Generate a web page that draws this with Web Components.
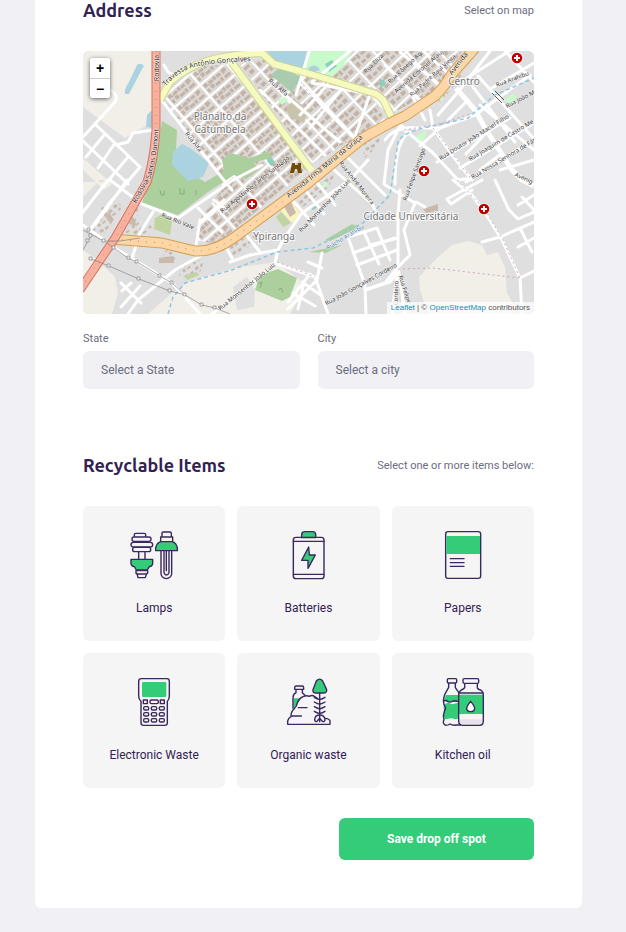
<!DOCTYPE html>
<html lang="en">
<head>
<meta charset="utf-8">
<meta name="viewport" content="width=device-width, initial-scale=1">
<title>Drop off spot</title>
<style>
body{margin:0;padding:0 44px 24px 35px;background:#f0f0f5;color:#322153;font-family:Roboto,sans-serif;font-size:12px}
</style>
</head>
<body>
<spot-form>
  <form-section heading="Address" hint="Select on map">
    <city-map></city-map>
    <field-row>
      <select-field label="State" placeholder="Select a State"></select-field>
      <select-field label="City" placeholder="Select a city"></select-field>
    </field-row>
  </form-section>
  <form-section heading="Recyclable Items" hint="Select one or more items below:">
    <item-grid>
      <item-card icon="lamps">Lamps</item-card>
      <item-card icon="batteries">Batteries</item-card>
      <item-card icon="papers">Papers</item-card>
      <item-card icon="electronic">Electronic Waste</item-card>
      <item-card icon="organic">Organic waste</item-card>
      <item-card icon="oil">Kitchen oil</item-card>
    </item-grid>
  </form-section>
  <save-button>Save drop off spot</save-button>
</spot-form>

<template id="map-template">
<style>
:host{display:block;position:relative;height:263px;border-radius:6px;overflow:hidden;background:#dfdfdf}
.map{display:block;width:100%;height:100%}
.zoom{position:absolute;left:7px;top:7px;display:flex;flex-direction:column;border-radius:3px;box-shadow:0 1px 4px #0009;background:#fff;overflow:hidden}
.zoom button{width:20px;height:20px;padding:0;border:0;background:#fff;color:#000;font:bold 14px/20px "Liberation Sans",Arial,sans-serif}
.zoom button+button{border-top:1px solid #ccc}
.credit{position:absolute;right:0;bottom:0;padding:0 4px;background:#ffffffb3;color:#555;font:8px/12px "Liberation Sans",Arial,sans-serif;white-space:nowrap}
a{color:#1b8ab5;text-decoration:none}
text{font-family:"Noto Sans",sans-serif;font-size:7px;fill:#333;stroke:#ffffffb0;stroke-width:1;paint-order:stroke;text-anchor:middle}
.streets text{font-size:6px}
.streets .water{fill:#4d80b3}
.place text{font-size:10px;fill:#777;stroke:#ffffffcc;stroke-width:2}
.white{fill:none;stroke:#fff;stroke-width:3;stroke-linejoin:round;stroke-linecap:round}
</style>
<svg class="map" viewBox="83 51 451 263" preserveAspectRatio="xMidYMid slice" role="img" aria-label="Street map">
  <defs>
    <pattern id="blocks" width="34" height="15" patternUnits="userSpaceOnUse" patternTransform="translate(163 96) rotate(-41)">
      <rect width="34" height="15" fill="#dbd8d5"/>
      <path fill="#c3b2a6" d="M3 3h4v3h2v-2h5v3H3zM15 3h3v4h-3zM19 4h5v3h-5zM26 3h5v4h-3v1h-2zM3 9h3v4H3zM8 8h4v4H8zM13 10h6v3h-6zM20 9h3v4h-3zM25 10h7v3h-7z"/>
      <path d="M0 0V15M0 0H34" stroke="#fff" stroke-width="4.6"/>
    </pattern>
    <pattern id="small" width="24" height="17" patternUnits="userSpaceOnUse" patternTransform="translate(300 80) rotate(-43)">
      <rect width="24" height="17" fill="#dbd8d5"/>
      <path fill="#c3b2a6" d="M3 3h5v3H3zM9 3h3v5H9zM14 4h7v3h-7zM3 9h4v5H3zM9 11h5v3H9zM16 10h5v4h-5z"/>
      <path d="M0 0V17M0 0H24" stroke="#fff" stroke-width="4"/>
    </pattern>
    <pattern id="houses" width="13" height="11" patternUnits="userSpaceOnUse" patternTransform="rotate(-38)">
      <path fill="#c8b9ae" d="M1 1h4v3H1zM7 2h4v3H7zM3 6h3v3H3zM8 7h4v2H8z"/>
    </pattern>
    <g id="hospital"><circle r="6" fill="#fff"/><circle r="5.3" fill="#bf0000"/><path d="M-3 0H3M0-3V3" stroke="#fff" stroke-width="2"/></g>
  </defs>
  <rect x="83" y="51" width="451" height="263" fill="#dfdfdf"/>
  <g fill="#f2efe9">
    <path d="M83 51H153V112L147 125 125 138 83 107zM83 158L112 184 104 190 83 170zM83 182H111L100 180 83 197zM83 250L95 258 115 277 118 293 112 314H83zM148 314L172 293 190 281 235 268 275 262 300 280 298 300 290 314z"/>
    <path d="M419 277L436 259 452 245 468 241 482 245 487 255 498 252 505 267 507 293 513 303V314H428L420 290z"/>
  </g>
  <path fill="#dfdfdf" d="M233 287L247 277 255 290 254 307 237 310z"/>
  <path fill="url(#blocks)" d="M161 98L182 78 205 66 232 64 310 168 240 225 216 244 196 240 202 215 222 190 222 178z"/>
  <path fill="url(#small)" d="M240 64L268 58 303 75 372 95 386 122 312 163z"/>
  <path fill="url(#small)" d="M345 51H462L437 90 392 113 380 90 325 76z"/>
  <path fill="url(#houses)" d="M103 205L113 200 123 206 100 240 90 232zM123 230L135 220 145 228 153 223 148 236 130 240zM293 190L325 169 334 176 328 188 302 208zM228 235L243 228 263 236 240 253 230 258zM166 250L176 252V261H160zM178 268L205 258 200 273 180 278zM360 140L382 130 378 146 365 158zM442 76L460 58 470 63 455 85 438 104zM131 205L139 207 136 225 127 222z"/>
  <g fill="#abcf9d">
    <path d="M162 121L177 130 176 150 185 170 205 182 224 171 222 160 230 153 250 158 268 151 272 158 254 162 258 170 246 179 234 175 208 192 178 215 142 203 150 180 158 150z"/>
    <path d="M255 290L260 275 278 269 297 278 290 297 282 301zM325 240L352 224 360 227 330 241zM309 252L342 245 326 253z"/>
  </g>
  <path fill="none" stroke="#86ad7a" d="M160 190l1 5h3v-4M180 188v6h4v-5M196 190v5M258 284l4-2-2 6M278 290l3-2 2 5"/>
  <path fill="#c0d49f" d="M155 218L164 213 172 221 170 235 154 229zM276 217L281 212 291 223 283 227zM184 276L197 272 199 275 187 280z"/>
  <path fill="#c8facc" d="M308 51H352L342 68 327 80 304 69zM433 100L444 87 443 100zM412 138L427 130 422 147zM503 100L513 94 518 99 508 103zM278 100L286 96 289 99 282 105zM319 187L326 181 328 185 321 189z"/>
  <path fill="#a9cbaf" d="M271 75L280 67 302 77 292 93z"/>
  <path fill="#c8c4ae" d="M286 107L294 100 309 109 304 123 289 117z"/>
  <path fill="#f8f5be" d="M279 208L290 199 301 215 292 223z"/>
  <path fill="#cabaae" d="M283 205L291 202 296 213 290 217zM159 258L173 256 174 263 159 263zM104 215L109 212 114 220 110 223zM132 215L137 226 129 224zM423 209L438 204 438 211 426 213z"/>
  <path fill="#8cd0ba" d="M267 161L271 157 275 162 271 166zM325 64L332 60 337 66 329 72zM378 83L384 79 386 85 381 87zM310 207L316 203 318 207 313 210z"/>
  <g fill="#aad3df"><path d="M137 65Q141 62 144 66L141 71 129 94H125Q124 89 129 82zM147 115L151 111 154 112V128L146 127zM173 152L182 144 190 148 209 163 203 177 188 181 172 165zM267 51H307L303 68 277 63zM308 68Q316 62 320 70L312 73z"/></g>

  <g class="white">
    <path d="M110 90Q119 95 115 102L95 124 83 137M95 124L140 167M83 141L128 184M115 143L98 168M105 134L86 157M140 167L108 205 90 230M116 145L128 142 133 133 153 130M128 157L108 181M108 180L83 212M127 180L95 225M83 225L115 248 172 283 200 314M110 180L142 204 178 218 233 180 262 165M153 212L140 233 132 258M128 314L138 300 175 270 216 247 235 240M121 283L141 303M140 286L121 307M131 283L122 291M164 65L168 72 174 75"/>
    <path d="M160 98L222 178 232 190M198 208L222 232M202 220L224 200M214 200L226 210M196 246L200 220M222 240L232 258"/>
    <path d="M230 262L250 255 278 250 283 240 302 213 350 180 368 160M278 250L275 263 230 300 212 314M275 263L315 277 328 314M322 253L317 280 288 309M308 262L322 268M293 293L315 306M302 282L322 296M310 274L288 302M304 282L298 309M348 237L377 228 390 260M348 237L365 285 366 314M353 253L395 238M357 265L397 250M365 290L390 282 398 272M364 232L379 264M247 236L260 252M288 195L314 225M302 186L324 214M315 180L335 205M332 168L372 204 376 212M345 155L385 195"/>
    <path d="M400 190L398 215V267L385 283 365 290M385 185L415 203 404 230 410 255 398 267 405 314M398 267L392 314M416 202L425 207M398 238L370 245M453 180L472 195 485 213 502 240 520 278 522 314M495 180L509 210 518 219 534 212M482 180L447 199 451 204 472 190M482 242L500 237 534 222M520 278L534 271M518 205L534 195M522 197L534 210M518 247L534 238M520 228L532 252"/>
    <path d="M490 51L458 92 438 115M385 140Q395 126 415 128L440 128 475 115 530 75M402 128L432 152 458 180 472 178M430 110L433 128 452 155 472 180M400 126L388 150 384 184M410 132Q395 140 395 184M437 162L510 118M460 168L534 123M466 182L534 140M505 51L534 82M478 76L534 139M473 87L515 142M464 80L534 35M492 88L534 63M480 105L534 150M468 100L448 120M486 133L466 154M501 154L480 170M500 170L534 160M432 152L424 146M420 146L440 128"/>
    <path d="M270 82L340 142M260 90L325 155M309 52L296 95M302 85L360 144M350 51L312 82M410 92L425 120M312 83L370 94M370 94L404 128M370 94L352 145M330 82L300 115M345 85L310 128M385 65L420 100M400 52L440 85M423 51L450 75"/>
  </g>
  <path d="M456 88L475 110 485 128 512 170 522 180 534 186" fill="none" stroke="#fff" stroke-width="5"/>
  <path d="M492 93L502 103M495 91L504 100" stroke="#555" stroke-width="1"/>
  <path fill="none" stroke="#8cc7e2" stroke-width="1.5" stroke-dasharray="4 3" d="M168 314L173 297 185 283 232 270 277 252 313 248 363 223 390 195 398 142Q403 132 428 127L468 118 495 95 534 78"/>
  <path fill="none" stroke="#c9a9bd" stroke-width="1" stroke-dasharray="2 3" d="M398 269L433 268 520 278M457 180L485 210 503 240 520 278M277 262L315 277M433 128L472 180M303 85L350 148M404 130L440 124 470 114"/>

  <g fill="none" stroke-linejoin="round">
    <path stroke="#cfd294" stroke-width="8" d="M160 100L170 82Q188 66 210 60T262 53L274 64 307 73 373 93C385 97 385 105 393 120M232 63L310 169"/>
    <path stroke="#f7fabf" stroke-width="6" d="M160 100L170 82Q188 66 210 60T262 53L274 64 307 73 373 93C385 97 385 105 393 120M224 56L232 63 312 171"/>
    <path stroke="#d5a05a" stroke-width="11" d="M112 239L162 243 195 251Q215 252 235 237L307 184 363 138 390 123 405 116 435 96Q445 86 452 74L475 48"/>
    <path stroke="#fcd6a4" stroke-width="9" d="M112 239L162 243 195 251Q215 252 235 237L307 184 363 138 390 123 405 116 435 96Q445 86 452 74L475 48"/>
    <path stroke="#d6745f" stroke-width="9" d="M156 51V130Q154 160 147 182L115 238 80 290"/>
    <path stroke="#f8b09f" stroke-width="7" d="M156 51V130Q154 160 147 182L115 238 80 290"/>
    <path stroke="#bd7f71" stroke-width="1" stroke-dasharray="1 7" d="M156 51V130Q154 160 147 182L115 238 83 285M122 240L162 243 195 251Q215 252 235 237L307 184"/>
  </g>
  <g fill="none" stroke="#777" stroke-width=".6">
    <path d="M83 230L104 241 114 248 128 258 137 262 160 276 172 283 185 295 202 305 215 308 230 314M91 259L109 266 139 279 170 291 185 295M91 236L88 241 83 250M104 241H120L140 238"/>
    <path fill="#eee" d="M87 228h3v3h-3zM89 234h3v3h-3zM86 239h3v3h-3zM102 239h3v3h-3zM112 246h3v3h-3zM127 256h3v3h-3zM135 260h3v3h-3zM158 274h3v3h-3zM170 281h3v3h-3zM168 289h3v3h-3zM183 293h3v3h-3zM200 303h3v3h-3zM213 306h3v3h-3zM89 257h3v3h-3zM107 264h3v3h-3zM137 277h3v3h-3z"/>
  </g>
  <path id="trav" d="M164 89Q172 77 186 70T254 61" fill="none"/>
  <text><textPath href="#trav" startOffset="50%">Travessa Antônio Gonçalves</textPath></text>
  <path id="rod" d="M134 207L150 179Q157 160 159 125" fill="none"/>
  <text><textPath href="#rod" startOffset="50%">Rodovia Santos Dumont</textPath></text>
  <text transform="translate(159 68) rotate(-90)">Rodovia</text>
  <text transform="translate(326 168) rotate(-39)">Avenida Irmã Maria da Graça</text>
  <text transform="translate(460 65) rotate(-52)">Avenida</text>
  <g class="streets">
    <text transform="translate(277 89) rotate(40)">Rua Alfa</text>
    <text transform="translate(192 143) rotate(52)">Rua Alfa</text>
    <text transform="translate(256 186) rotate(-39)">Rua Agostinho Carlos Santiago</text>
    <text transform="translate(177 223) rotate(22)">Rua Rio Vale</text>
    <text transform="translate(326 207) rotate(-46)">Rua Monsenhor João Luis</text>
    <text transform="translate(355 184) rotate(52)">Rua André Moreira</text>
    <text transform="translate(248 288) rotate(-39)">Rua Monsenhor João Luiz</text>
    <text transform="translate(362 286) rotate(-29)">Rua João Gonçalves Cordeiro</text>
    <text class="water" transform="translate(346 239) rotate(-31)">Riacho Arahibu</text>
    <text transform="translate(416 175) rotate(-70)">Rua Felipe Santiago</text>
    <text transform="translate(375 65) rotate(-44)">Rua Eliza</text>
    <text transform="translate(406 69) rotate(-43)">Rua Cônego Ag</text>
    <text transform="translate(420 73) rotate(-41)">Avenida Coronel Arauj</text>
    <text transform="translate(434 77) rotate(-42)">Rua Padre Raul Vieira</text>
    <text transform="translate(513 81) rotate(-20)">Rua Arahibu</text>
    <text transform="translate(521 101) rotate(-27)">Rua João M</text>
    <text transform="translate(475 139) rotate(-32)">Rua Doutor João Maciel Filho</text>
    <text transform="translate(502 142) rotate(-31)">Rua Joaquim de Castro Me</text>
    <text transform="translate(505 160) rotate(-31)">Rua Nossa Senhora de Fáti</text>
    <text transform="translate(523 180) rotate(25)">Avenig</text>
    <text transform="translate(398 293) rotate(-88)">Cordeiro</text>
    <text transform="translate(403 290) rotate(72)">Rua Felipe</text>
  </g>
  <g class="place">
    <text x="220" y="120">Planalto da</text><text x="220" y="133">Catumbela</text>
    <text x="464" y="85">Centro</text><text x="411" y="220">Cidade Universitária</text><text x="274" y="240">Ypiranga</text>
  </g>
  <path fill="#734a08" d="M292 163h3v2h3v-2h3v5l1 5h-4l-1-4h-2l-1 4h-4l1-5z"/>
  <use href="#hospital" x="517" y="58"/><use href="#hospital" x="424" y="171"/><use href="#hospital" x="484" y="209"/><use href="#hospital" x="252" y="204"/>
</svg>
<div class="zoom"><button type="button" aria-label="Zoom in">+</button><button type="button" aria-label="Zoom out">−</button></div>
<div class="credit"><a href="#leaflet">Leaflet</a> | © <a href="#osm">OpenStreetMap</a> contributors</div>
</template>

<script>
const define = (name, render) => customElements.define(name, class extends HTMLElement {
  connectedCallback() {
    if (this.shadowRoot) return;
    const root = this.attachShadow({ mode: 'open' });
    const content = render(this);
    if (typeof content === 'string') root.innerHTML = content;
    else root.append(content);
  }
});

const icons = {
  lamps: `<svg viewBox="30 33 144 144"><g fill="none">
    <path d="M43 49v-5q0-4 4-4h26q4 0 4 4v5"/><rect x="36" y="51" width="57" height="13" rx="6"/><rect x="33" y="67" width="65" height="14" rx="7"/><rect x="38" y="82" width="54" height="13" rx="6"/>
    <path d="M56 97v19M75 97v19"/><path class="g" d="M33 118H98V130Q98 139 88 140L82 150H49L43 140Q33 139 33 130z"/><path d="M48 152H83V160H80L76 173H54L51 160H48zM50 162H80"/>
    <path d="M126 48V40Q126 36 130 36H150Q154 36 154 40V48M122 64V51H158V64"/><path class="g" d="M107 92V84Q110 68 123 65H156Q169 68 172 84V92z"/><path d="M123 94V162Q125 174 139 176Q153 174 155 162V94M132 94V158Q134 165 139 165T147 158V94M139 94V152"/></g></svg>`,
  batteries: `<svg viewBox="28 33 144 144"><path class="g" d="M81 53V43Q82 35 90 35H114Q122 35 123 43V53z"/><rect x="56" y="52" width="92" height="124" rx="8" fill="none"/><path d="M56 64H148M56 163H148" fill="none"/><path class="g" d="M102 81L81 121H100V145L122 105H104z"/></svg>`,
  papers: `<svg viewBox="27 33 144 144"><rect x="47" y="35" width="105" height="140" rx="7" fill="none"/><path d="M49 48H150V102H49z" fill="#34cb79" stroke="none"/><path d="M61 116H102M61 128H102M61 139H102" fill="none"/></svg>`,
  electronic: `<svg viewBox="30 33 144 144"><path fill="none" d="M64 35H141Q148 35 148 43V88Q148 96 142 103V168Q142 175 134 175H71Q63 175 63 168V103Q56 96 56 88V43Q56 35 64 35z"/><rect x="66" y="45" width="73" height="45" rx="4" fill="#34cb79" stroke="none"/><path fill="none" d="M70 99H82V110H70zM121 99H133V110H121z"/><g fill="none"><rect x="90" y="99" width="25" height="11" rx="4"/><rect x="71" y="119" width="15" height="10" rx="4"/><rect x="94" y="119" width="16" height="10" rx="4"/><rect x="118" y="119" width="15" height="10" rx="4"/><rect x="71" y="137" width="15" height="10" rx="4"/><rect x="94" y="137" width="16" height="10" rx="4"/><rect x="118" y="137" width="15" height="10" rx="4"/><rect x="71" y="155" width="15" height="10" rx="4"/><rect x="94" y="155" width="16" height="10" rx="4"/><rect x="118" y="155" width="15" height="10" rx="4"/></g></svg>`,
  organic: `<svg viewBox="28 33 144 144"><path d="M56 94H75L66 116 57 123z" fill="#34cb79" stroke="none"/><g fill="none"><path d="M60 67V62Q60 57 65 57H82Q87 57 87 62V67zM64 68V77Q55 82 55 92V124M83 68V77L91 85"/><path d="M39 172V162Q41 153 49 149Q48 136 58 126Q67 118 68 107Q73 94 85 89Q96 84 104 88Q113 83 120 89L128 94M39 172H166V161Q164 155 151 154M71 122H97M52 147H80"/><path class="g" d="M125 42Q135 31 144 42L156 68Q157 78 146 78H124Q113 78 115 68z"/><path d="M135 78V164M119 91Q127 96 135 98Q143 96 151 91M119 105Q127 110 135 112Q143 110 151 105M119 119Q127 124 135 126Q143 124 151 119M119 133Q127 138 135 140Q143 138 151 133M135 144Q121 144 120 158Q121 166 127 163L135 154 143 163Q150 166 151 158Q149 144 135 144"/></g></svg>`,
  oil: `<svg viewBox="27 33 144 144"><path d="M48 84H86V98L78 106 63 103 52 106 42 98z" fill="#34cb79" stroke="none"/><path d="M41 112L55 107 67 112 86 107V155L75 157 65 154 45 157 42 150z" fill="#34cb79" stroke="none"/><path d="M87 83H159V141H87z" fill="#34cb79" stroke="none"/><path d="M87 157H159V163Q158 173 150 174H97Q88 173 87 163z" fill="#e4e4e4" stroke="none"/><g fill="none"><rect x="52" y="35" width="28" height="13" rx="3"/><path d="M56 49V61L44 83Q38 100 42 112L47 124Q37 145 42 157Q36 170 47 175Q55 175 60 171Q68 176 78 174H90M76 49V62L86 76M41 102Q48 99 53 103T67 103T84 104"/><rect x="99" y="35" width="47" height="14" rx="4"/><path d="M104 50V62Q102 66 94 69Q86 74 86 84V163Q87 175 98 175H149Q160 175 160 163V84Q160 74 152 69Q142 66 142 62V50M86 78H160"/></g><path d="M122 103Q110 117 110 125Q111 134 122 134T134 125Q134 117 122 103z" fill="#fff"/></svg>`
};

define('spot-form', () => `<style>
:host{display:block}
form{display:block;padding:0 48px 48px;background:#fff;border-radius:0 0 6px 6px}
::slotted(form-section:nth-of-type(n+2)){margin-top:66px}
::slotted(save-button){margin-top:30px}
</style><form><slot></slot></form>`);

define('form-section', el => `<style>
:host{display:block}
header{display:flex;justify-content:space-between;align-items:center;margin-bottom:30px}
h2{margin:0;font:bold 18px/21px Ubuntu,"Noto Sans",sans-serif}
span{font-size:11px;line-height:21px;color:#6c6c80}
</style><section><header><h2>${el.getAttribute('heading')}</h2><span>${el.getAttribute('hint')}</span></header><slot></slot></section>`);

define('city-map', () => document.getElementById('map-template').content.cloneNode(true));

define('field-row', () => `<style>
:host{display:grid;grid-template-columns:1fr 1fr;gap:18px;margin-top:17px}
</style><slot></slot>`);

define('select-field', el => `<style>
:host{display:block}
label{display:block;margin-bottom:4px;font-size:11px;line-height:16px;color:#6c6c80}
select{display:block;width:100%;height:38px;padding:0 18px;border:0;border-radius:6px;appearance:none;background:#f0f0f5;color:#6c6c80;font:12px/16px Roboto,sans-serif}
</style><label for="s">${el.getAttribute('label')}</label><select id="s"><option>${el.getAttribute('placeholder')}</option></select>`);

define('item-grid', () => `<style>
:host{display:grid;grid-template-columns:repeat(3,1fr);gap:12px}
</style><slot></slot>`);

define('item-card', el => `<style>
:host{display:block}
button{display:flex;flex-direction:column;align-items:center;gap:21px;width:100%;padding:25px 8px;border:0;border-radius:6px;background:#f5f5f5;color:#322153;font:12px/16px Roboto,sans-serif;cursor:pointer}
svg{display:block;width:48px;height:48px;overflow:visible;stroke:#3b2860;stroke-width:4.2;stroke-linejoin:round;stroke-linecap:round}
.g{fill:#34cb79}
</style><button type="button" aria-pressed="false">${icons[el.getAttribute('icon')]}<span><slot></slot></span></button>`);

define('save-button', () => `<style>
:host{display:flex;justify-content:flex-end}
button{width:195px;height:42px;border:0;border-radius:6px;background:#34cb79;color:#fff;font:bold 12px/16px Roboto,sans-serif;cursor:pointer}
</style><button type="button"><slot></slot></button>`);
</script>
</body>
</html>
